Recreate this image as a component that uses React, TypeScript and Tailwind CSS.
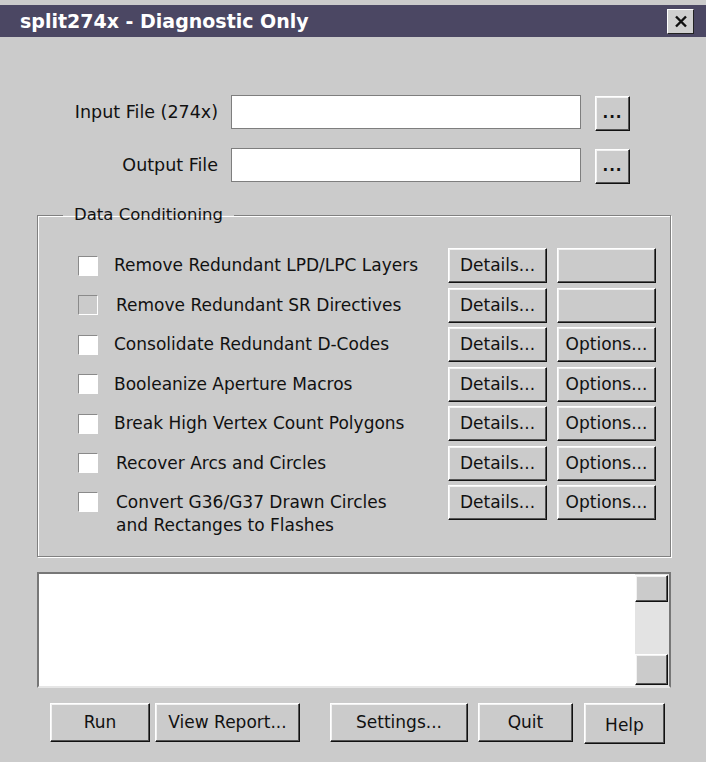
import React from "react"

const raised =
  "bg-[#cbcbcb] border border-t-white border-l-white border-r-[#111] border-b-[#111] shadow-[inset_-1px_-1px_0_#555,inset_1px_1px_0_#f2f2f2]"

function WinButton({ label, className = "" }: { label: string; className?: string }) {
  return (
    <button className={`${raised} flex items-center justify-center text-[17px] leading-none text-[#111] ${className}`}>
      {label}
    </button>
  )
}

function Check({ disabled = false }: { disabled?: boolean }) {
  return (
    <div
      className={`w-[20px] h-[20px] shrink-0 border border-t-[#8a8a8a] border-l-[#8a8a8a] border-r-white border-b-white ${
        disabled ? "bg-[#cbcbcb]" : "bg-white"
      }`}
    />
  )
}

const rows: { label: string[]; disabled?: boolean; options: boolean; shift?: boolean }[] = [
  { label: ["Remove Redundant LPD/LPC Layers"], options: false },
  { label: ["Remove Redundant SR Directives"], disabled: true, options: false, shift: true },
  { label: ["Consolidate Redundant D-Codes"], options: true },
  { label: ["Booleanize Aperture Macros"], options: true },
  { label: ["Break High Vertex Count Polygons"], options: true },
  { label: ["Recover Arcs and Circles"], options: true, shift: true },
  { label: ["Convert G36/G37 Drawn Circles", "and Rectanges to Flashes"], options: true, shift: true },
]

export default function App() {
  return (
    <div className="w-[706px] h-[762px] bg-[#cbcbcb] pt-[5px] font-['DejaVu_Sans',sans-serif] text-[#111] overflow-hidden">
      {/* Title bar */}
      <div className="h-[32px] bg-[#4b4763] flex items-center pl-[20px] pr-[12px]">
        <span className="flex-1 text-white font-bold text-[19px] leading-none">split274x - Diagnostic Only</span>
        <div className="w-[27px] h-[25px] bg-[#d0d0d0] border border-t-white border-l-white border-r-[#222] border-b-[#222] flex items-center justify-center">
          <svg width="14" height="13" viewBox="0 0 14 13">
            <path d="M2 1.5 L12 11.5 M12 1.5 L2 11.5" stroke="#111" strokeWidth="2.4" />
          </svg>
        </div>
      </div>

      {/* File inputs */}
      <div className="mt-[58px] flex flex-col gap-[17px]">
        {["Input File (274x)", "Output File"].map((l) => (
          <div key={l} className="flex items-start">
            <div className="w-[218px] h-[34px] flex items-center justify-end text-[17.5px]">{l}</div>
            <div className="ml-[13px] w-[350px] h-[34px] bg-white border border-[#7e7e7e]" />
            <button className={`${raised} ml-[14px] w-[35px] h-[35px] flex items-center justify-center mt-[1px]`}>
              <span className="text-[15px] font-bold leading-none tracking-[1px]">...</span>
            </button>
          </div>
        ))}
      </div>

      {/* Data Conditioning group */}
      <fieldset className="mt-[21px] mx-[37px] w-[634px] border border-[#808080] shadow-[inset_1px_1px_0_white,1px_1px_0_white] pt-[23px] pb-[36px] pr-[14px]">
        <legend className="ml-[25px] px-[11px] text-[16.5px] leading-[20px]">Data Conditioning</legend>
        <div className="flex flex-col gap-[4.5px]">
          {rows.map((r, i) => (
            <div key={i} className={`flex h-[35px] ${r.label.length > 1 ? "items-start" : "items-center"}`}>
              <div className={`ml-[40px] ${r.label.length > 1 ? "mt-[7px]" : ""}`}>
                <Check disabled={r.disabled} />
              </div>
              <div
                className={`flex-1 text-[17px] ${r.shift ? "ml-[18px]" : "ml-[16px]"} ${
                  r.label.length > 1 ? "leading-[23px] pt-[6px]" : "leading-none"
                }`}
              >
                {r.label.map((t) => (
                  <div key={t}>{t}</div>
                ))}
              </div>
              <WinButton label="Details..." className="w-[99px] h-[35px]" />
              <WinButton label={r.options ? "Options..." : ""} className="ml-[10px] w-[99px] h-[35px]" />
            </div>
          ))}
        </div>
      </fieldset>

      {/* Log area */}
      <div className="mt-[15px] mx-[37px] w-[634px] h-[116px] bg-white border-2 border-t-[#777] border-l-[#777] border-r-[#777] border-b-[#e6e6e6] flex">
        <div className="flex-1" />
        <div className="w-[36px] border-l-2 border-white bg-[#e3e3e3] flex flex-col justify-between py-[1px] pr-[1px]">
          <div className={`${raised} h-[27px]`} />
          <div className={`${raised} h-[31px]`} />
        </div>
      </div>

      {/* Bottom buttons */}
      <div className="mt-[15px] flex items-start pl-[50px]">
        <WinButton label="Run" className="w-[100px] h-[39px]" />
        <WinButton label="View Report..." className="ml-[5px] w-[145px] h-[39px]" />
        <WinButton label="Settings..." className="ml-[30px] w-[138px] h-[39px]" />
        <WinButton label="Quit" className="ml-[10px] w-[95px] h-[39px]" />
        <WinButton label="Help" className="ml-[11px] w-[81px] h-[41px] pt-[4px]" />
      </div>
    </div>
  )
}
